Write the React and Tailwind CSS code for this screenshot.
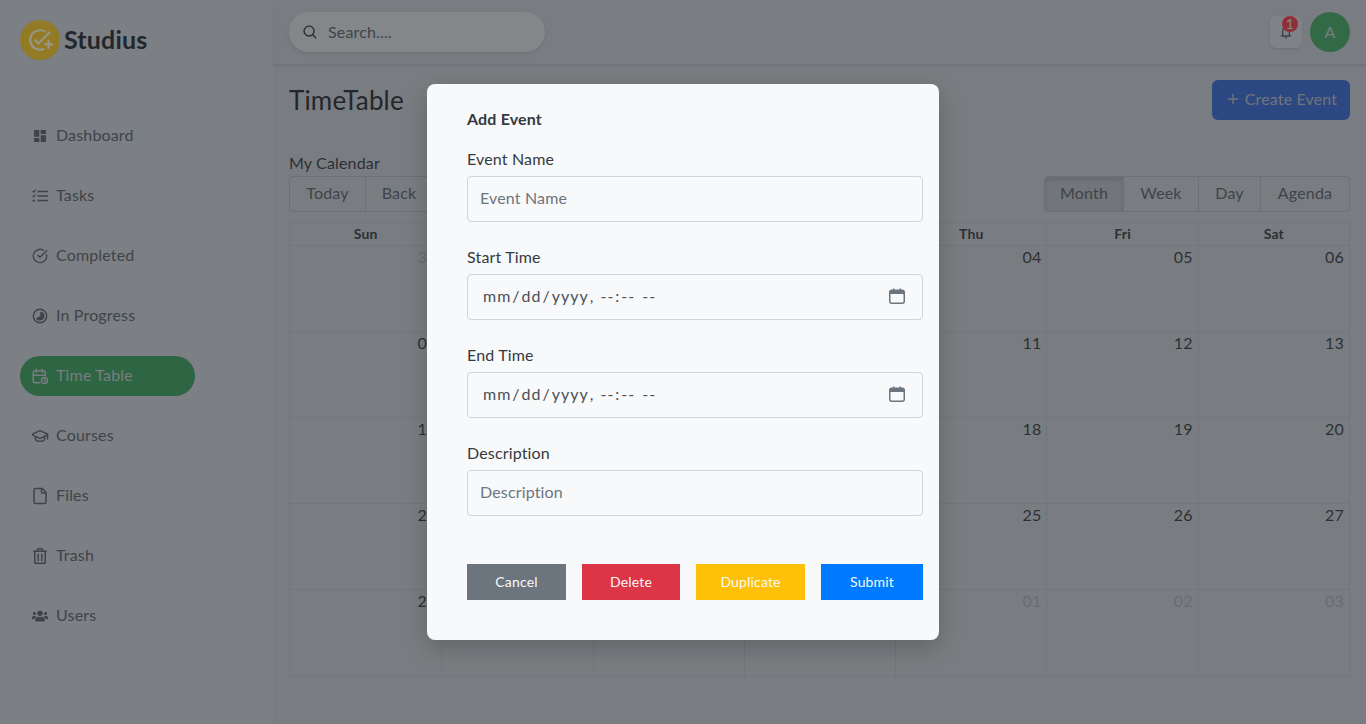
import React from 'react';
import { MdDashboard, MdOutlineAddTask, MdOutlineNotifications } from 'react-icons/md';
import { BiSearch } from 'react-icons/bi';
import { TbCalendarTime } from 'react-icons/tb';
import { FaUsers, FaRegTrashAlt } from 'react-icons/fa';
import { FiPlus } from 'react-icons/fi';
import { CircleCheckBig, File, GraduationCap } from 'lucide-react';

const TasksIcon = ({ size }) => (
  <svg width={size} height={size} viewBox="0 0 16 16" fill="none" stroke="currentColor">
    <path d="M5.5 3.5H16M5.5 8H16M5.5 12.5H16" strokeWidth="1.6" />
    <path d="M0.5 3l1.2 1.2L3.6 1.6M0.5 7.6l1.2 1.2 1.9-2.6" strokeWidth="1.1" />
    <circle cx="1.8" cy="12.6" r="1.2" fill="currentColor" stroke="none" />
  </svg>
);

const ProgressIcon = ({ size }) => (
  <svg width={size} height={size} viewBox="0 0 16 16" fill="none" stroke="currentColor">
    <circle cx="8" cy="8" r="6.7" strokeWidth="1.4" />
    <path d="M8.3 3.6A4.5 4.5 0 1 1 4 10.2L8.3 8Z" fill="currentColor" stroke="none" />
  </svg>
);

const CalendarGlyph = () => (
  <svg width="16" height="16" viewBox="0 0 16 16" className="absolute right-[18px] top-[14px] text-[#6c757d] pointer-events-none">
    <path d="M4 0.5h1.5v2H4zM10.5 0.5H12v2h-1.5z" fill="currentColor" />
    <rect x="0.75" y="2.25" width="14.5" height="13" rx="2" fill="none" stroke="currentColor" strokeWidth="1.5" />
    <path d="M1 3.5a1.5 1.5 0 0 1 1.5-1.5h11A1.5 1.5 0 0 1 15 3.5V6H1z" fill="currentColor" />
  </svg>
);

const navItems = [
  { label: 'Dashboard', icon: MdDashboard, size: 16 },
  { label: 'Tasks', icon: TasksIcon, size: 16 },
  { label: 'Completed', icon: CircleCheckBig, size: 16 },
  { label: 'In Progress', icon: ProgressIcon, size: 16 },
  { label: 'Time Table', icon: TbCalendarTime, size: 18, active: true },
  { label: 'Courses', icon: GraduationCap, size: 18 },
  { label: 'Files', icon: File, size: 18 },
  { label: 'Trash', icon: FaRegTrashAlt, size: 16 },
  { label: 'Users', icon: FaUsers, size: 16 },
];

const weeks = [
  ['31', '01', '02', '03', '04', '05', '06'],
  ['07', '08', '09', '10', '11', '12', '13'],
  ['14', '15', '16', '17', '18', '19', '20'],
  ['21', '22', '23', '24', '25', '26', '27'],
  ['28', '29', '30', '31', '01', '02', '03'],
];

const days = ['Sun', 'Mon', 'Tue', 'Wed', 'Thu', 'Fri', 'Sat'];

const Sidebar = () => (
  <aside className="w-[273px] shrink-0 h-full">
    <div className="flex items-center gap-1 pl-5 pt-5 h-[60px]">
      <div className="w-10 h-10 rounded-full bg-[#e0b224] flex items-center justify-center text-[#e8e2c8]">
        <MdOutlineAddTask size={26} />
      </div>
      <span className="text-[25px] font-bold text-[#25282e]">Studius</span>
    </div>
    <nav className="mt-[56px] flex flex-col gap-5 pl-5">
      {navItems.map(({ label, icon: Icon, size, active }) => (
        <div
          key={label}
          className={`flex items-center w-[175px] h-10 rounded-[20px] text-base ${active ? 'bg-[#379055] text-[#b4b8bc]' : 'text-[#54585f]'}`}
        >
          <span className="w-4 ml-3 mr-2 shrink-0 flex justify-center [&>svg]:shrink-0"><Icon size={size} /></span>
          <span className="pb-[2px]">{label}</span>
        </div>
      ))}
    </nav>
  </aside>
);

const Topbar = () => (
  <header className="h-[64px] shrink-0 flex items-center justify-between pl-4 pr-4 shadow-[0_2px_3px_rgba(0,0,0,0.1)]">
    <div className="w-[256px] h-10 rounded-[20px] bg-[#c6c8cc] shadow-[0_2px_5px_rgba(0,0,0,0.1)] flex items-center gap-[9px] pl-[13px] text-base text-[#54585f]">
      <BiSearch size={17} className="text-[#33373d]" />
      <span className="pb-px">Search....</span>
    </div>
    <div className="flex items-center gap-2">
      <div className="relative w-8 h-8 rounded-md bg-[#bfc1c6] shadow-sm flex items-center justify-center text-[#54585f]">
        <MdOutlineNotifications size={16} />
        <span className="absolute top-0 left-3 w-4 h-4 rounded-full bg-[#dc3545] text-[#c9ccd0] text-sm flex items-center justify-center">1</span>
      </div>
      <div className="w-10 h-10 rounded-full bg-[#3f985d] text-[#b4b8bc] flex items-center justify-center text-base">A</div>
    </div>
  </header>
);

const ToolButton = ({ children, active, className = '' }) => (
  <div className={`h-9 flex items-center justify-center pb-[2px] border border-[#9ea1a6] text-[#54585f] text-base ${active ? 'bg-[#a9abb0] shadow-[inset_0_3px_5px_rgba(0,0,0,0.12)]' : ''} ${className}`}>
    {children}
  </div>
);

const Calendar = () => (
  <div className="text-[#33373d]">
    <div className="text-base leading-[22px] h-[24px]">My Calendar</div>
    <div className="flex justify-between h-9">
      <div className="flex">
        <ToolButton className="w-[77px] rounded-l">Today</ToolButton>
        <ToolButton className="w-[68px] -ml-px">Back</ToolButton>
        <ToolButton className="w-[68px] -ml-px rounded-r">Next</ToolButton>
      </div>
      <div className="flex">
        <ToolButton active className="w-[80px] rounded-l">Month</ToolButton>
        <ToolButton className="w-[76px] -ml-px">Week</ToolButton>
        <ToolButton className="w-[63px] -ml-px">Day</ToolButton>
        <ToolButton className="w-[90px] -ml-px rounded-r">Agenda</ToolButton>
      </div>
    </div>
    <div className="mt-[10px] border border-[#a8aaaf]">
      <div className="grid grid-cols-7 h-[23px] border-b border-[#a8aaaf]">
        {days.map((d) => (
          <div key={d} className="flex items-center justify-center text-sm font-bold border-l first:border-l-0 border-[#a8aaaf] text-[#33373d]">{d}</div>
        ))}
      </div>
      {weeks.map((week, i) => (
        <div key={i} className="grid grid-cols-7 h-[86px] border-b last:border-b-0 border-[#a8aaaf]">
          {week.map((d, j) => {
            const off = (i === 0 && j < 1) || (i === 4 && j > 3);
            return (
              <div key={j} className={`text-right pr-[5px] text-base leading-[22px] border-l first:border-l-0 border-[#a8aaaf] ${off ? 'text-[#989ba0]' : 'text-[#33373d]'}`}>{d}</div>
            );
          })}
        </div>
      ))}
    </div>
  </div>
);

const Field = ({ label, type, placeholder }) => (
  <div className="relative flex flex-col gap-1">
    <label className="text-base leading-[22px] h-6 text-[#343a40]">{label}</label>
    {type === 'text' ? (
      <input
        type="text"
        placeholder={placeholder}
        className="w-full h-[46px] bg-transparent border border-[#ced4da] rounded text-base text-[#495057] placeholder:text-[#6c757d] outline-none px-3 pb-[3px]"
      />
    ) : (
      <div className="relative">
        <input
          type="datetime-local"
          className="w-full h-[46px] bg-transparent border border-[#ced4da] rounded text-base tracking-[1px] text-[#495057] outline-none pl-[14px] pr-[15px] pb-[3px] [&::-webkit-calendar-picker-indicator]:opacity-0"
        />
        <CalendarGlyph />
      </div>
    )}
  </div>
);

const Modal = () => (
  <div className="absolute left-[427px] top-[84px] w-[512px] h-[556px] bg-[#f8f9fa] rounded-lg shadow-[0_8px_24px_rgba(0,0,0,0.2)] pl-10 pr-4 pt-6">
    <div className="text-base font-bold leading-[22px] h-6 text-[#343a40]">Add Event</div>
    <form className="mt-4 flex flex-col gap-6">
      <Field label="Event Name" type="text" placeholder="Event Name" />
      <Field label="Start Time" type="datetime-local" />
      <Field label="End Time" type="datetime-local" />
      <Field label="Description" type="text" placeholder="Description" />
    </form>
    <div className="mt-12 flex gap-4">
      <button className="w-[99px] h-9 bg-[#6c757d] text-[#f8f9fa] text-sm">Cancel</button>
      <button className="w-[98px] h-9 bg-[#dc3545] text-[#f8f9fa] text-sm">Delete</button>
      <button className="w-[109px] h-9 bg-[#ffc107] text-[#f8f9fa] text-sm">Duplicate</button>
      <button className="w-[102px] h-9 bg-[#007bff] text-[#f8f9fa] text-sm">Submit</button>
    </div>
  </div>
);

export default function App() {
  return (
    <div className="relative w-[1366px] h-[724px] overflow-hidden bg-[#b9bbc0] tracking-[0.01em] font-['Lato','Noto_Sans',sans-serif]">
      <div className="flex h-full">
        <Sidebar />
        <div className="flex-1 flex flex-col min-w-0 bg-[#b5b7bc]">
          <Topbar />
          <main className="pl-4 pr-4 pt-4">
            <div className="flex items-start justify-between h-[72px]">
              <h1 className="text-[26px] leading-10 pb-px text-[#25282e]">TimeTable</h1>
              <button className="w-[138px] h-10 rounded-md bg-[#3560c0] text-[#a5a9b0] flex items-center justify-center gap-1 pb-[2px]">
                <FiPlus size={16} />
                Create Event
              </button>
            </div>
            <Calendar />
          </main>
        </div>
      </div>
      <div className="absolute inset-0 bg-[#212529]/40" />
      <Modal />
    </div>
  );
}
